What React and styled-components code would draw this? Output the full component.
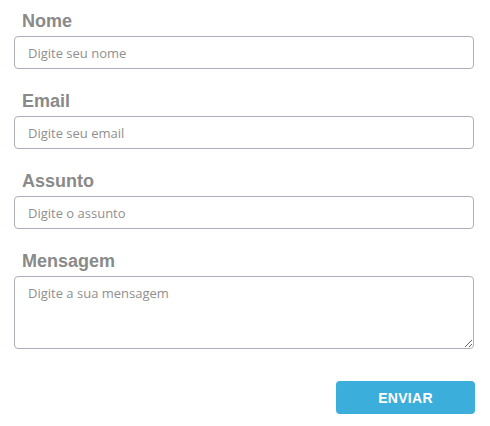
import styled, { createGlobalStyle } from "styled-components";

const GlobalStyle = createGlobalStyle`
  body {
    margin: 0;
    background: #fff;
    font-family: "Liberation Sans", Arial, sans-serif;
  }
`;

const fields = [
  { label: "Nome", placeholder: "Digite seu nome" },
  { label: "Email", placeholder: "Digite seu email" },
  { label: "Assunto", placeholder: "Digite o assunto" },
];

export default function App() {
  return (
    <>
      <GlobalStyle />
      <Form onSubmit={(e) => e.preventDefault()}>
        {fields.map((f) => (
          <Field key={f.label}>
            <Label>{f.label}</Label>
            <Input placeholder={f.placeholder} />
          </Field>
        ))}
        <Field>
          <Label>Mensagem</Label>
          <TextArea placeholder="Digite a sua mensagem" />
        </Field>
        <Actions>
          <Button type="submit">ENVIAR</Button>
        </Actions>
      </Form>
    </>
  );
}

const Form = styled.form`
  width: 460px;
  margin-left: 14px;
  padding-top: 11px;
  display: flex;
  flex-direction: column;
  gap: 22px;
`;

const Field = styled.div`
  display: flex;
  flex-direction: column;
  gap: 5px;
`;

const Label = styled.label`
  margin-left: 8px;
  font-size: 18px;
  line-height: 20px;
  font-weight: bold;
  color: #8a8a8a;
`;

const fieldBase = `
  box-sizing: border-box;
  width: 100%;
  border: 1px solid #a9afbb;
  border-radius: 4px;
  font-family: "Open Sans", "Noto Sans", sans-serif;
  font-size: 13px;
  color: #444;
  outline: none;
  &::placeholder {
    color: #8f8f8f;
  }
`;

const Input = styled.input`
  ${fieldBase}
  height: 33px;
  padding: 0 13px;
`;

const TextArea = styled.textarea`
  ${fieldBase}
  height: 73px;
  padding: 7px 13px;
  resize: vertical;
  display: block;
`;

const Actions = styled.div`
  display: flex;
  justify-content: flex-end;
  margin-top: 10px;
  margin-right: -1px;
`;

const Button = styled.button`
  width: 139px;
  height: 33px;
  border: none;
  border-radius: 4px;
  background: #3caedb;
  color: #fff;
  font-family: "Liberation Sans", Arial, sans-serif;
  font-weight: bold;
  font-size: 14px;
  letter-spacing: 0.3px;
  cursor: pointer;
`;
